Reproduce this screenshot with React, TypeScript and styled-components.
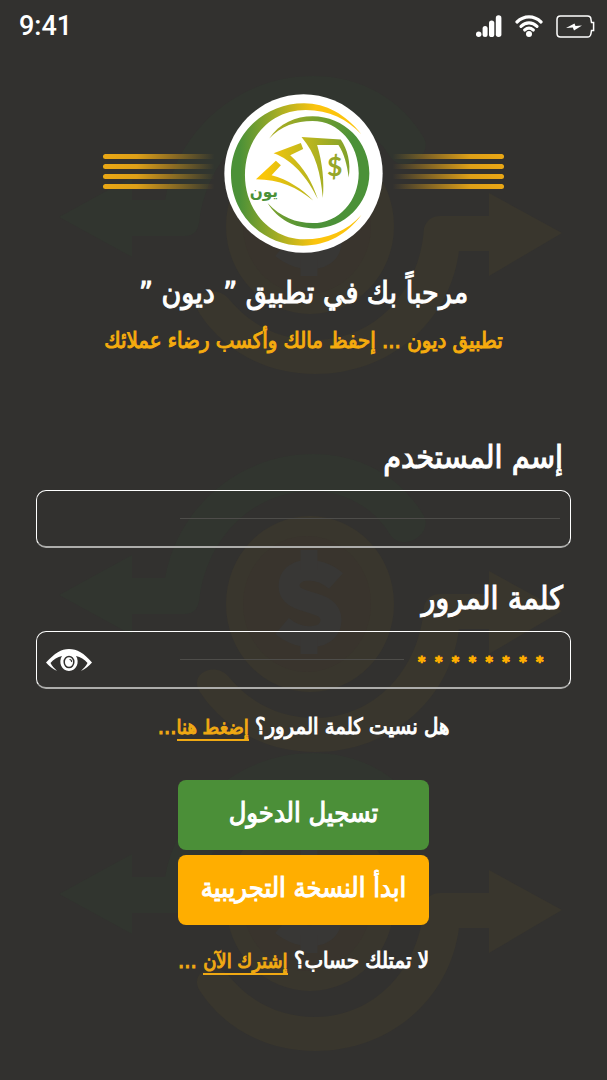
import React, { useState } from "react";
import styled, { createGlobalStyle } from "styled-components";

const white = "#ffffff";
const amber = "#ffae00";
const green = "#4b8f38";

const GlobalStyle = createGlobalStyle`
  *, *::before, *::after { box-sizing: border-box; }
  body {
    margin: 0;
    background: #32312f;
    color: ${white};
    font-family: "DejaVu Sans Condensed", "DejaVu Sans", sans-serif;
  }
`;

const Screen = styled.div`
  position: relative;
  min-height: 100vh;
  overflow: hidden;
  display: flex;
  flex-direction: column;
`;

const Backdrop = styled.svg`
  position: absolute;
  inset: 0;
  width: 100%;
  z-index: -1;
`;

const StatusBar = styled.header`
  display: flex;
  align-items: center;
  justify-content: space-between;
  height: 52px;
  padding: 0 12px 0 19px;
`;

const Clock = styled.time`
  font: 500 27px/32px Roboto, sans-serif;
`;

const StatusIcons = styled.div`
  display: flex;
  align-items: center;
  gap: 13px;
`;

const Main = styled.main`
  display: flex;
  flex-direction: column;
  align-items: center;
  padding: 42px 36px 0;
  -webkit-text-stroke: 1px currentColor;
  paint-order: stroke fill;
`;

const Emblem = styled.div`
  display: flex;
  align-items: center;
  width: 100%;
  max-width: 401px;
  -webkit-text-stroke: 0;
`;

const Stripes = styled.div<{ $fade: "left" | "right" }>`
  flex: 1;
  display: flex;
  flex-direction: column;
  justify-content: space-between;
  height: 36px;
  margin-bottom: 4px;

  span {
    height: 5px;
    border-radius: 3px;
    background: linear-gradient(to ${(p) => p.$fade}, #eaa714, #dd9f18 28%, rgba(221, 159, 24, 0) 92%);
  }
`;

const Title = styled.h1`
  margin: 20px 0 0;
  font-size: 30px;
  line-height: 40px;
  font-weight: 400;
  white-space: nowrap;
`;

const Tagline = styled.p`
  margin: 12px 0 0;
  font-size: 22px;
  line-height: 32px;
  color: #f5ab0e;
  white-space: nowrap;
`;

const Form = styled.form`
  display: flex;
  flex-direction: column;
  align-items: center;
  width: 100%;
  margin-top: 75px;
`;

const FieldGroup = styled.div`
  display: flex;
  flex-direction: column;
  width: 100%;
  margin-bottom: 25px;
`;

const Label = styled.label`
  padding: 0 8px;
  margin-bottom: 8px;
  font-size: 32px;
  line-height: 50px;
`;

const Field = styled.div`
  display: flex;
  align-items: center;
  justify-content: space-between;
  height: 58px;
  padding: 0 10px 0 9px;
  border: 1px solid ${white};
  border-bottom: 2px solid #adadab;
  border-radius: 10px;
`;

const Input = styled.input<{ $rule: string }>`
  width: 74%;
  height: 40px;
  padding: 2px 16px 0;
  border: 0;
  outline: 0;
  color: ${amber};
  font: 700 14px/36px "DejaVu Sans Mono", monospace;
  -webkit-text-stroke: 1px currentColor;
  background: linear-gradient(#4e4d4a, #4e4d4a) left center / ${(p) => p.$rule} 1px no-repeat;
`;

const IconButton = styled.button`
  display: flex;
  padding: 0;
  border: 0;
  background: none;
  color: ${white};
  cursor: pointer;
`;

const Prompt = styled.p`
  margin: 0;
  font-size: 22px;
  line-height: 26px;
  white-space: nowrap;
`;

const Accent = styled.span`
  color: #f0a913;
`;

const Link = styled.a`
  color: inherit;
  font-size: 20px;
  text-decoration: none;
  border-bottom: 2px solid currentColor;
`;

const Actions = styled.div`
  display: flex;
  flex-direction: column;
  gap: 5px;
  width: 251px;
  max-width: 100%;
  margin: 40px 0 23px;
`;

const Button = styled.button<{ $color: string }>`
  height: 70px;
  padding: 0 0 4px;
  border: 0;
  border-radius: 8px;
  background: ${(p) => p.$color};
  color: ${white};
  font-family: inherit;
  font-size: 27px;
  line-height: 40px;
  white-space: nowrap;
  -webkit-text-stroke: inherit;
  cursor: pointer;
`;

function CoinMark({ y }: { y: number }) {
  return (
    <g transform={`translate(0 ${y})`}>
      <g fill="#31352f">
        <path d="M59 141 132 101V124H165C178 52 240 0 313 0C362 0 402 24 424 62C433 80 404 98 391 82C374 54 347 38 313 37C255 37 210 80 200 140C199 153 196 160 184 160H132V181Z" />
      </g>
      <g fill="#39362d">
        <path d="M562 157 489 117V140H440Q428 140 424 152C420 215 375 264 315 264C278 264 248 247 228 222C214 207 188 220 200 238C224 275 266 298 315 298C391 298 450 245 459 175H489V200Z" />
        <ellipse cx="310" cy="150" rx="84" ry="88" />
      </g>
      <ellipse cx="307" cy="150" rx="64" ry="68" fill="#39342d" />
      <g fill="none" stroke="#383735">
        <path strokeWidth="21" d="M336 127C318 111 289 113 289 132C289 153 331 143 331 166C331 186 301 188 282 172" />
        <path strokeWidth="17" d="M309 96V116M309 182V200" />
      </g>
    </g>
  );
}

function Logo() {
  return (
    <svg width="159" height="159" viewBox="34 24 478 478" role="img" aria-label="ديون">
      <defs>
        <linearGradient id="outerRing" gradientUnits="userSpaceOnUse" x1="55" y1="0" x2="310" y2="0">
          <stop offset="0.1" stopColor="#4b9138" />
          <stop offset="0.55" stopColor="#a4ad25" />
          <stop offset="1" stopColor="#fcc40d" />
        </linearGradient>
        <linearGradient id="innerRing" gradientUnits="userSpaceOnUse" x1="165" y1="90" x2="400" y2="200">
          <stop offset="0" stopColor="#c0b41f" />
          <stop offset="0.5" stopColor="#7aa12e" />
          <stop offset="1" stopColor="#4b9138" />
        </linearGradient>
        <linearGradient id="notes" gradientUnits="userSpaceOnUse" x1="130" y1="0" x2="412" y2="0">
          <stop offset="0.1" stopColor="#fac608" />
          <stop offset="0.5" stopColor="#c4b91c" />
          <stop offset="1" stopColor="#7fa12c" />
        </linearGradient>
      </defs>
      <circle cx="273" cy="263" r="238" fill="#fff" />
      <path
        fill="url(#outerRing)"
        d="M447 145C400 85 340 52 275 52C150 52 55 150 55 265C55 385 150 480 270 480C345 480 405 445 447 388C405 435 345 461 275 461C175 461 97 375 97 268C97 155 175 72 280 72C350 72 405 100 447 145Z"
      />
      <path
        fill="url(#innerRing)"
        d="M170 158C200 112 250 91 300 91C395 91 471 167 471 262C471 355 395 428 305 428C245 428 195 400 165 352C205 395 250 412 300 412C380 412 439 345 439 262C439 175 380 105 300 105C250 105 205 120 170 158Z"
      />
      <g fill="url(#notes)">
        <path d="M267 153 385 161C405 190 416 230 409 275C404 235 395 203 378 177H314C330 230 336 290 331 337C325 262 310 203 267 153Z" />
        <path d="M183 202 265 171 272 189 233 208C275 245 300 290 316 340C285 275 240 222 183 202Z" />
        <path d="M130 280 190 225 205 238 177 268C225 280 270 310 302 344C255 305 200 280 130 280Z" />
      </g>
      <text x="367" y="271" textAnchor="middle" fontFamily="Lato, sans-serif" fontWeight="700" fontSize="80" fill="#97a728">
        $
      </text>
      <text x="154" y="334" textAnchor="middle" fontFamily="DejaVu Sans, sans-serif" fontWeight="700" fontSize="46" fill="#4b9138">
        يون
      </text>
    </svg>
  );
}

function SignalIcon() {
  return (
    <svg width="26" height="22" viewBox="0 0 26 22" fill="currentColor" aria-hidden="true">
      <circle cx="2.7" cy="19.2" r="2.7" />
      <rect x="6.600" y="11" width="5" height="11" rx="2.500" />
      <rect x="13" y="5.500" width="5.300" height="16.500" rx="2.600" />
      <rect x="19.800" y="0.300" width="5.600" height="21.700" rx="2.700" />
    </svg>
  );
}

function WifiIcon() {
  return (
    <svg width="28" height="22" viewBox="0 0 28 22" fill="none" stroke="currentColor" strokeWidth="3.200" strokeLinecap="round" aria-hidden="true">
      <path d="M2 7C9 .2 19 .2 26 7" />
      <path d="M6 11.300C10.800 6.800 17.200 6.800 22 11.300" />
      <path d="M9.700 15C12.300 12.800 15.700 12.800 18.300 15" />
      <circle cx="14" cy="19" r="3" fill="currentColor" stroke="none" />
    </svg>
  );
}

function BatteryIcon() {
  return (
    <svg width="39" height="23" viewBox="0 0 39 23" aria-hidden="true">
      <path
        d="M4.500 1H31.500Q34.800 1 35 4.500L35.500 7.500H37.600V15.500H35.500L35 18.500Q34.500 22 31.500 22H4.500Q1 22 1 18.500V4.500Q1 1 4.500 1Z"
        fill="none"
        stroke="currentColor"
        strokeWidth="1.500"
      />
      <path d="M10 13 18.500 8.500 19.500 11 26 10.500 18 15.500 16.800 12.500Z" fill="currentColor" />
    </svg>
  );
}

function EyeIcon() {
  return (
    <svg width="46" height="22" viewBox="0 0 46 22" aria-hidden="true">
      <path
        fill="currentColor"
        d="M0 13.500C9 4 15 0 23 0C31 0 38 4 46 13.500C43 17 39.500 20 35 22C37.500 19.500 40 17 41.500 14C38.500 10.500 34.500 8 30 7C34 13 30.500 22 23 22C15.500 22 12 13 16 7C11.500 8 7.500 10.500 4.500 14C6 17 8.500 19.500 11 22C6.500 20 3 17 0 13.500Z"
      />
      <ellipse cx="23" cy="13" rx="4.800" ry="5.600" fill="none" stroke="#32312f" strokeWidth="1.500" />
      <path d="M23.500 10.500Q26 10.800 25.500 13" fill="none" stroke="#32312f" strokeWidth="1.200" />
    </svg>
  );
}

export default function App() {
  const [username, setUsername] = useState("");
  const [password, setPassword] = useState("* * * * * * * *");

  return (
    <>
      <GlobalStyle />
      <Screen>
        <Backdrop viewBox="0 0 607 1080" aria-hidden="true">
          <CoinMark y={76} />
          <CoinMark y={454} />
          <CoinMark y={753} />
        </Backdrop>

        <StatusBar>
          <Clock>9:41</Clock>
          <StatusIcons>
            <SignalIcon />
            <WifiIcon />
            <BatteryIcon />
          </StatusIcons>
        </StatusBar>

        <Main dir="rtl" lang="ar">
          <Emblem>
            <Stripes $fade="left">
              <span />
              <span />
              <span />
              <span />
            </Stripes>
            <Logo />
            <Stripes $fade="right">
              <span />
              <span />
              <span />
              <span />
            </Stripes>
          </Emblem>

          <Title>مرحباً بك في تطبيق ” ديون ”</Title>
          <Tagline>تطبيق ديون ... إحفظ مالك وأكسب رضاء عملائك</Tagline>

          <Form onSubmit={(e) => e.preventDefault()}>
            <FieldGroup>
              <Label htmlFor="username">إسم المستخدم</Label>
              <Field>
                <Input
                  id="username"
                  $rule="100%"
                  value={username}
                  onChange={(e) => setUsername(e.target.value)}
                />
              </Field>
            </FieldGroup>
            <FieldGroup>
              <Label htmlFor="password">كلمة المرور</Label>
              <Field>
                <Input
                  id="password"
                  $rule="59%"
                  value={password}
                  onChange={(e) => setPassword(e.target.value)}
                />
                <IconButton type="button" aria-label="إظهار كلمة المرور">
                  <EyeIcon />
                </IconButton>
              </Field>
            </FieldGroup>

            <Prompt>
              هل نسيت كلمة المرور؟ <Accent><Link href="#reset">إضغط هنا</Link>...</Accent>
            </Prompt>

            <Actions>
              <Button type="submit" $color={green}>تسجيل الدخول</Button>
              <Button type="button" $color={amber}>ابدأ النسخة التجريبية</Button>
            </Actions>

            <Prompt>
              لا تمتلك حساب؟ <Accent><Link href="#signup">إشترك الآن</Link> ...</Accent>
            </Prompt>
          </Form>
        </Main>
      </Screen>
    </>
  );
}
